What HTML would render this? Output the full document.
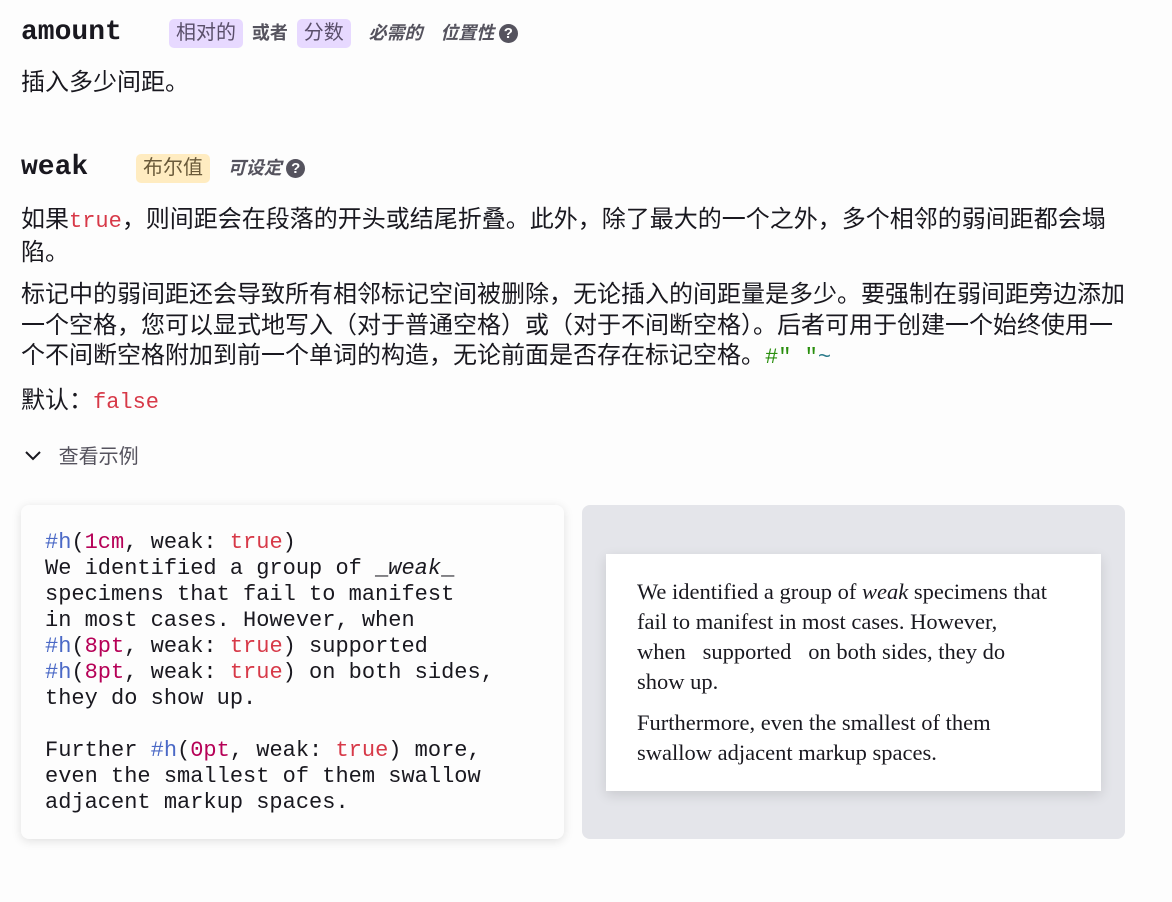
<!DOCTYPE html>
<html><head><meta charset="utf-8"><style>
*{margin:0;padding:0;box-sizing:border-box}
body{width:1172px;height:902px;background:#fdfdfd;font-family:"Liberation Sans","Noto Sans CJK SC",sans-serif;color:#19181f;position:relative;overflow:hidden}
.a{position:absolute;white-space:nowrap}
.name{font-family:"Liberation Mono","Noto Sans CJK SC",monospace;font-weight:bold;font-size:28px;color:#19181f}
.tag{display:inline-block;padding:0 7px;border-radius:5px;font-size:20px;line-height:29px;color:#5a4f6a}
.pur{background:#e7d9ff}
.yel{background:#ffecc1;color:#6a5a3a}
.it{font-style:italic;font-weight:bold;font-size:18px;color:#55535e}
.q{display:inline-block;width:19px;height:19px;border-radius:50%;background:#55535e;color:#fff;font-size:15px;font-weight:bold;text-align:center;line-height:19px;vertical-align:1px;font-style:normal}
.p{font-size:24px;line-height:30.5px}
.c{font-family:"Liberation Mono",monospace;font-size:22px}
.red{color:#d73948}
.code{position:absolute;left:21px;top:505px;width:543px;height:334px;background:#fdfdfd;border-radius:8px;box-shadow:0 2px 10px rgba(0,0,0,.12)}
.code pre{position:absolute;left:24px;top:25px;font-family:"Liberation Mono",monospace;font-size:22px;line-height:26px;color:#19181f}
.b{color:#4b69c6}.n{color:#b60157}.t{color:#d73948}
.prev{position:absolute;left:582px;top:505px;width:543px;height:334px;background:#e4e5ea;border-radius:8px}
.page{position:absolute;left:24px;top:49px;width:495px;height:237px;background:#fff;box-shadow:0 4px 12px rgba(0,0,0,.12)}
.page div{position:absolute;left:31px;font-family:"Liberation Serif",serif;font-size:22.5px;line-height:30px;color:#19181f;white-space:nowrap}
</style></head><body>
<div class="a name" style="left:21px;top:17px">amount</div>
<div class="a" style="left:169px;top:19px"><span class="tag pur">相对的</span>&nbsp; <b style="font-size:18px;color:#55535e">或者</b>&nbsp; <span class="tag pur">分数</span> &nbsp;&nbsp; <span class="it">必需的</span> &nbsp;&nbsp; <span class="it">位置性</span> <span class="q">?</span></div>
<div class="a p" style="left:21px;top:68px">插入多少间距。</div>

<div class="a name" style="left:21px;top:152px">weak</div>
<div class="a" style="left:136px;top:154px"><span class="tag yel">布尔值</span> &nbsp;&nbsp; <span class="it">可设定</span> <span class="q">?</span></div>

<div class="a p" style="left:21px;top:205px">如果<span class="c red">true</span>，则间距会在段落的开头或结尾折叠。此外，除了最大的一个之外，多个相邻的弱间距都会塌<br>陷。</div>
<div class="a p" style="left:21px;top:280px">标记中的弱间距还会导致所有相邻标记空间被删除，无论插入的间距量是多少。要强制在弱间距旁边添加<br>一个空格，您可以显式地写入（对于普通空格）或（对于不间断空格）。后者可用于创建一个始终使用一<br>个不间断空格附加到前一个单词的构造，无论前面是否存在标记空格。<span class="c" style="color:#298e0d">#" "</span><span class="c" style="color:#2a7a8a">~</span></div>
<div class="a p" style="left:21px;top:386px">默认：<span class="c red">false</span></div>
<div class="a" style="left:24px;top:440px;font-size:20px;color:#55535e"><svg width="18" height="12" viewBox="0 0 18 12" style="vertical-align:2px"><path d="M2 3l7 7 7-7" fill="none" stroke="#19181f" stroke-width="2"/></svg> &nbsp;&nbsp;查看示例</div>

<div class="code"><pre><span class="b">#h</span>(<span class="n">1cm</span>, weak: <span class="t">true</span>)
We identified a group of _<i>weak</i>_
specimens that fail to manifest
in most cases. However, when
<span class="b">#h</span>(<span class="n">8pt</span>, weak: <span class="t">true</span>) supported
<span class="b">#h</span>(<span class="n">8pt</span>, weak: <span class="t">true</span>) on both sides,
they do show up.

Further <span class="b">#h</span>(<span class="n">0pt</span>, weak: <span class="t">true</span>) more,
even the smallest of them swallow
adjacent markup spaces.</pre></div>

<div class="prev"><div class="page">
<div style="top:23px">We identified a group of <i>weak</i> specimens that</div>
<div style="top:53px">fail to manifest in most cases. However,</div>
<div style="top:83px">when &nbsp; supported &nbsp; on both sides, they do</div>
<div style="top:113px">show up.</div>
<div style="top:154px">Furthermore, even the smallest of them</div>
<div style="top:184px">swallow adjacent markup spaces.</div>
</div></div>
</body></html>
